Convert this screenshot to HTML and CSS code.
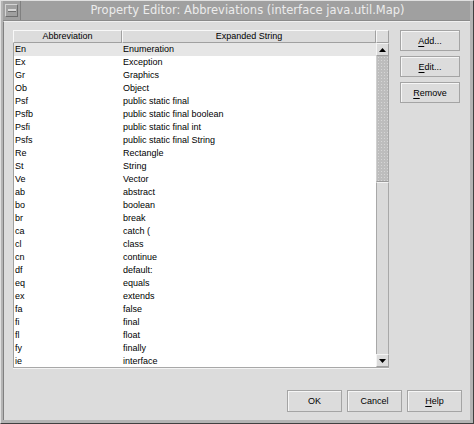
FILE: index.html
```html
<!DOCTYPE html>
<html>
<head>
<meta charset="utf-8">
<link rel="stylesheet" href="styles.css">
</head>
<body>
<div class="window">
  <div class="titlebar">
    <div class="minbtn"><span class="dash"></span></div>
    <div class="title">Property Editor: Abbreviations (interface java.util.Map)</div>
  </div>
  <div class="content">
    <div class="main">
      <div class="table">
        <div class="thead">
          <div class="th c1">Abbreviation</div>
          <div class="th c2">Expanded String</div>
          <div class="th corner"></div>
        </div>
        <div class="tbody">
          <div class="rows">
            <div class="row sel"><span class="c1">En</span><span class="c2">Enumeration</span></div>
            <div class="row"><span class="c1">Ex</span><span class="c2">Exception</span></div>
            <div class="row"><span class="c1">Gr</span><span class="c2">Graphics</span></div>
            <div class="row"><span class="c1">Ob</span><span class="c2">Object</span></div>
            <div class="row"><span class="c1">Psf</span><span class="c2">public static final</span></div>
            <div class="row"><span class="c1">Psfb</span><span class="c2">public static final boolean</span></div>
            <div class="row"><span class="c1">Psfi</span><span class="c2">public static final int</span></div>
            <div class="row"><span class="c1">Psfs</span><span class="c2">public static final String</span></div>
            <div class="row"><span class="c1">Re</span><span class="c2">Rectangle</span></div>
            <div class="row"><span class="c1">St</span><span class="c2">String</span></div>
            <div class="row"><span class="c1">Ve</span><span class="c2">Vector</span></div>
            <div class="row"><span class="c1">ab</span><span class="c2">abstract</span></div>
            <div class="row"><span class="c1">bo</span><span class="c2">boolean</span></div>
            <div class="row"><span class="c1">br</span><span class="c2">break</span></div>
            <div class="row"><span class="c1">ca</span><span class="c2">catch (</span></div>
            <div class="row"><span class="c1">cl</span><span class="c2">class</span></div>
            <div class="row"><span class="c1">cn</span><span class="c2">continue</span></div>
            <div class="row"><span class="c1">df</span><span class="c2">default:</span></div>
            <div class="row"><span class="c1">eq</span><span class="c2">equals</span></div>
            <div class="row"><span class="c1">ex</span><span class="c2">extends</span></div>
            <div class="row"><span class="c1">fa</span><span class="c2">false</span></div>
            <div class="row"><span class="c1">fi</span><span class="c2">final</span></div>
            <div class="row"><span class="c1">fl</span><span class="c2">float</span></div>
            <div class="row"><span class="c1">fy</span><span class="c2">finally</span></div>
            <div class="row"><span class="c1">ie</span><span class="c2">interface</span></div>
          </div>
          <div class="vscroll">
            <div class="sbtn"><svg width="7" height="4" viewBox="0 0 7 4"><polygon points="0,4 7,4 3.5,0" fill="#000"/></svg></div>
            <div class="thumb"></div>
            <div class="track"></div>
            <div class="sbtn"><svg width="7" height="4" viewBox="0 0 7 4"><polygon points="0,0 7,0 3.5,4" fill="#000"/></svg></div>
          </div>
        </div>
      </div>
      <div class="side">
        <div class="btn"><u>A</u>dd...</div>
        <div class="btn"><u>E</u>dit...</div>
        <div class="btn"><u>R</u>emove</div>
      </div>
    </div>
    <div class="footer">
      <div class="btn wide">OK</div>
      <div class="btn wide">Cancel</div>
      <div class="btn wide"><u>H</u>elp</div>
    </div>
  </div>
</div>
</body>
</html>
```

FILE: styles.css
```css
html, body {
  margin: 0;
  padding: 0;
  background: #dcdcdc;
}
.window {
  width: 474px;
  height: 424px;
  box-sizing: border-box;
  background: #b4b4b4;
  border-left: 1px solid #e0e0e0;
  border-top: 1px solid #e0e0e0;
  border-right: 1px solid #404040;
  border-bottom: 1px solid #404040;
  padding: 0 3px 3px 2px;
  display: flex;
  flex-direction: column;
  font-family: "Liberation Sans", Arial, sans-serif;
  font-size: 9px;
  color: #000;
}
.titlebar {
  height: 19px;
  display: flex;
  align-items: stretch;
  background: #a0a0a0;
  border-bottom: 1px solid #8a8a8a;
}
.minbtn {
  width: 13px;
  margin: 3px 2px 3px 2px;
  border-top: 1px solid #d4d4d4;
  border-left: 1px solid #d4d4d4;
  border-right: 1px solid #6e6e6e;
  border-bottom: 1px solid #6e6e6e;
  display: flex;
  align-items: center;
  justify-content: center;
  box-sizing: border-box;
}
.dash {
  width: 8px;
  height: 2px;
  background: #d8d8d8;
  border-bottom: 1px solid #6e6e6e;
}
.title {
  flex: 1;
  text-align: center;
  font-family: "DejaVu Sans", sans-serif;
  font-size: 11.5px;
  color: #ececec;
  line-height: 19px;
  padding-left: 4px;
  border-left: 1px solid #808080;
}
.content {
  flex: 1;
  background: #dcdcdc;
  border-left: 1px solid #808080;
  border-top: 1px solid #f0f0f0;
  padding: 8px 8px 8px 9px;
  display: flex;
  flex-direction: column;
}
.main {
  display: flex;
  gap: 11px;
  align-items: flex-start;
}
.table {
  width: 376px;
  display: flex;
  flex-direction: column;
  border-bottom: 1px solid #a8a8a8;
  box-shadow: 0 1px 0 #f4f4f4;
}
.thead {
  display: flex;
  height: 13px;
}
.th {
  box-sizing: border-box;
  background: #dcdcdc;
  border-top: 1px solid #f8f8f8;
  border-left: 1px solid #f8f8f8;
  border-right: 1px solid #a0a0a0;
  border-bottom: 1px solid #a0a0a0;
  text-align: center;
  line-height: 11px;
}
.th.c1 { width: 109px; }
.th.c2 { width: 254px; }
.th.corner { width: 13px; }
.tbody {
  display: flex;
  height: 324px;
}
.rows {
  width: 363px;
  background: #fff;
  border-left: 1px solid #a0a0a0;
  box-sizing: border-box;
}
.row {
  display: flex;
  height: 13px;
  line-height: 13px;
}
.row.sel { background: #e6e6e6; }
.row .c1 { width: 108px; padding-left: 1px; box-sizing: border-box; }
.row .c2 { padding-left: 1px; }
.vscroll {
  width: 13px;
  display: flex;
  flex-direction: column;
  background: #d8d8d8;
}
.sbtn {
  height: 13px;
  box-sizing: border-box;
  background: #dcdcdc;
  border-top: 1px solid #f4f4f4;
  border-left: 1px solid #f4f4f4;
  border-right: 1px solid #a0a0a0;
  border-bottom: 1px solid #a0a0a0;
  display: flex;
  align-items: center;
  justify-content: center;
}
.thumb {
  height: 126px;
  box-sizing: border-box;
  background-color: #bdbdbd;
  background-image: radial-gradient(circle, #d6d6d6 0.7px, transparent 0.9px);
  background-size: 3px 3px;
  border-left: 1px solid #cfcfcf;
  border-right: 1px solid #a8a8a8;
  border-bottom: 1px solid #9a9a9a;
}
.track {
  flex: 1;
  background: #dadada;
  border-left: 1px solid #a8a8a8;
  border-right: 1px solid #a8a8a8;
  border-top: 1px solid #f4f4f4;
}
.side {
  display: flex;
  flex-direction: column;
  gap: 5px;
}
.btn {
  width: 60px;
  height: 21px;
  box-sizing: border-box;
  background: #dcdcdc;
  border: 1px solid #a4a4a4;
  box-shadow: inset 1px 1px 0 #f6f6f6;
  display: flex;
  align-items: center;
  justify-content: center;
}
.btn u {
  text-decoration-thickness: 1px;
  text-underline-offset: 2px;
}
.btn.wide {
  width: 55px;
  height: 22px;
}
.footer {
  margin-top: auto;
  display: flex;
  justify-content: flex-end;
  gap: 5px;
  padding-right: 0;
}
```
